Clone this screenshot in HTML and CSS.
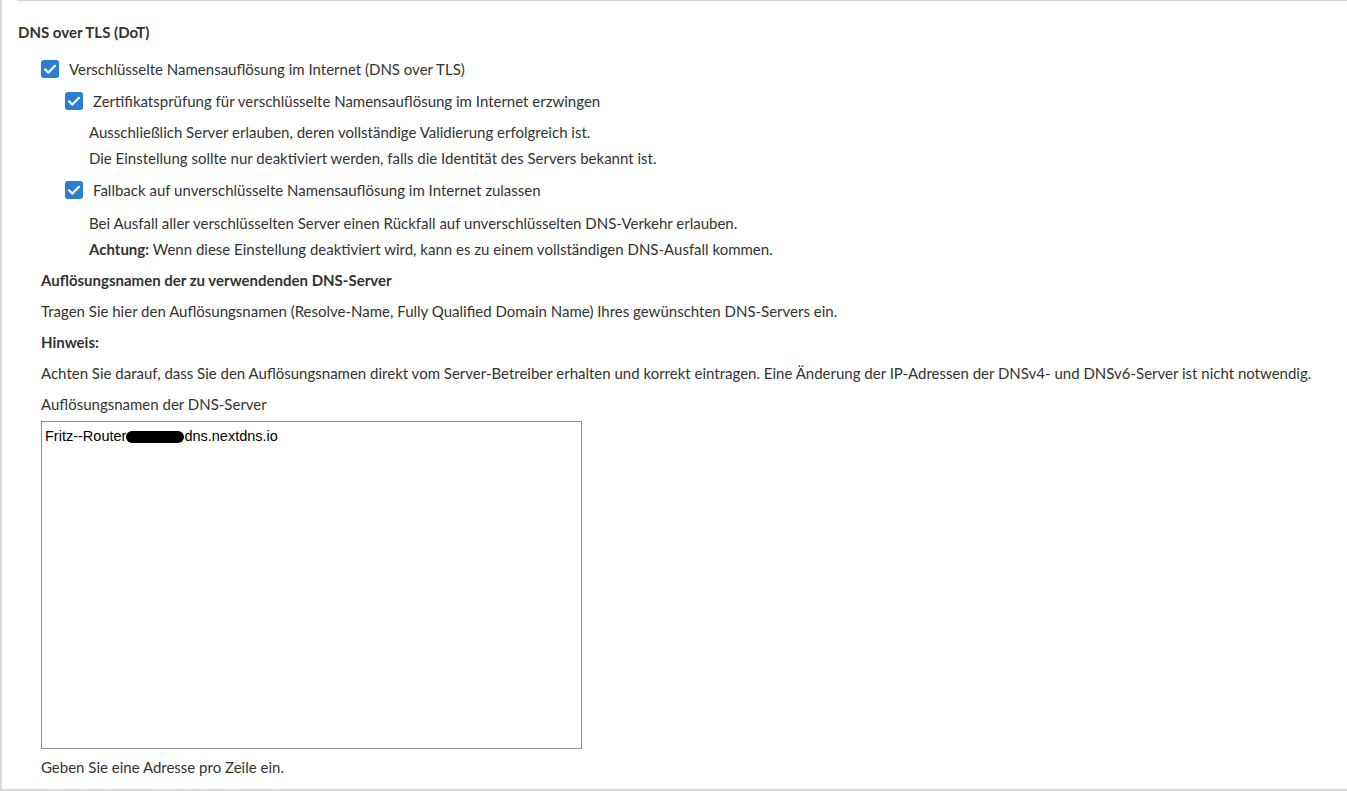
FILE: index.html
```html
<!DOCTYPE html>
<html lang="de">
<head>
<meta charset="utf-8">
<title>DNS over TLS</title>
<link rel="stylesheet" href="styles.css">
</head>
<body>
<div class="panel">
  <div class="sep"></div>
  <h3 class="heading">DNS over TLS (DoT)</h3>
  <div class="content">
    <label class="check-row">
      <span class="box"><svg viewBox="0 0 18 18" width="18" height="18"><path d="M4 9.3 L7.4 12.6 L14 5.8" fill="none" stroke="#fff" stroke-width="2.2" stroke-linecap="round" stroke-linejoin="round"/></svg></span>
      <span>Verschlüsselte Namensauflösung im Internet (DNS over TLS)</span>
    </label>
    <label class="check-row sub">
      <span class="box"><svg viewBox="0 0 18 18" width="18" height="18"><path d="M4 9.3 L7.4 12.6 L14 5.8" fill="none" stroke="#fff" stroke-width="2.2" stroke-linecap="round" stroke-linejoin="round"/></svg></span>
      <span>Zertifikatsprüfung für verschlüsselte Namensauflösung im Internet erzwingen</span>
    </label>
    <div class="desc">
      <p>Ausschließlich Server erlauben, deren vollständige Validierung erfolgreich ist.</p>
      <p>Die Einstellung sollte nur deaktiviert werden, falls die Identität des Servers bekannt ist.</p>
    </div>
    <label class="check-row sub">
      <span class="box"><svg viewBox="0 0 18 18" width="18" height="18"><path d="M4 9.3 L7.4 12.6 L14 5.8" fill="none" stroke="#fff" stroke-width="2.2" stroke-linecap="round" stroke-linejoin="round"/></svg></span>
      <span>Fallback auf unverschlüsselte Namensauflösung im Internet zulassen</span>
    </label>
    <div class="desc second">
      <p>Bei Ausfall aller verschlüsselten Server einen Rückfall auf unverschlüsselten DNS-Verkehr erlauben.</p>
      <p><strong>Achtung:</strong> Wenn diese Einstellung deaktiviert wird, kann es zu einem vollständigen DNS-Ausfall kommen.</p>
    </div>
    <p class="line bold first">Auflösungsnamen der zu verwendenden DNS-Server</p>
    <p class="line">Tragen Sie hier den Auflösungsnamen (Resolve-Name, Fully Qualified Domain Name) Ihres gewünschten DNS-Servers ein.</p>
    <p class="line bold">Hinweis:</p>
    <p class="line">Achten Sie darauf, dass Sie den Auflösungsnamen direkt vom Server-Betreiber erhalten und korrekt eintragen. Eine Änderung der IP-Adressen der DNSv4- und DNSv6-Server ist nicht notwendig.</p>
    <p class="line">Auflösungsnamen der DNS-Server</p>
    <div class="textarea"><span>Fritz--Router</span><span class="redact"></span><span>dns.nextdns.io</span></div>
    <p class="line hint">Geben Sie eine Adresse pro Zeile ein.</p>
  </div>
</div>
</body>
</html>
```
FILE: styles.css
```css
html, body {
  margin: 0;
  padding: 0;
  background: #fff;
}
body {
  font-family: Lato, "Open Sans", sans-serif;
  font-size: 15px;
  color: #333;
}
.panel {
  box-sizing: border-box;
  height: 791px;
  border-left: 2px solid #d9d9d9;
  border-bottom: 2px solid #d9d9d9;
}
.sep {
  margin-left: 15px;
  border-top: 1px solid #d0d0d0;
}
.heading {
  margin: 21px 0 0 16px;
  font-size: 15px;
  font-weight: bold;
  line-height: 20px;
}
.content {
  padding-left: 39px;
}
.check-row {
  display: flex;
  align-items: center;
  gap: 10px;
  height: 20px;
  line-height: 20px;
  margin-top: 12px;
}
.content > .check-row:first-child {
  margin-top: 17px;
}
.check-row.sub {
  margin-left: 24px;
  margin-top: 9px;
}
.content > .check-row:first-child + .check-row.sub {
  margin-top: 12px;
}
.box {
  width: 18px;
  height: 18px;
  border-radius: 3px;
  background: #2a7fd5;
  display: flex;
  flex: none;
}
.desc {
  margin: 8px 0 0 48px;
}
.desc.second {
  margin-top: 10px;
}
.desc p {
  margin: 0;
  line-height: 26px;
}
.line {
  margin: 11px 0 0 0;
  line-height: 20px;
}
.line.first {
  margin-top: 8px;
}
.bold {
  font-weight: bold;
}
.textarea {
  box-sizing: border-box;
  margin-top: 7px;
  width: 541px;
  height: 328px;
  border: 1px solid #8d8c99;
  padding: 5px 3px;
  font-family: "Liberation Sans", Arial, sans-serif;
  font-size: 14.5px;
  line-height: 18px;
  color: #000;
  display: flex;
  align-items: flex-start;
}
.redact {
  display: inline-block;
  width: 58px;
  height: 12px;
  margin-top: 4px;
  background: #000;
  border-radius: 6px;
}
.line.hint {
  margin-top: 8px;
}
```
